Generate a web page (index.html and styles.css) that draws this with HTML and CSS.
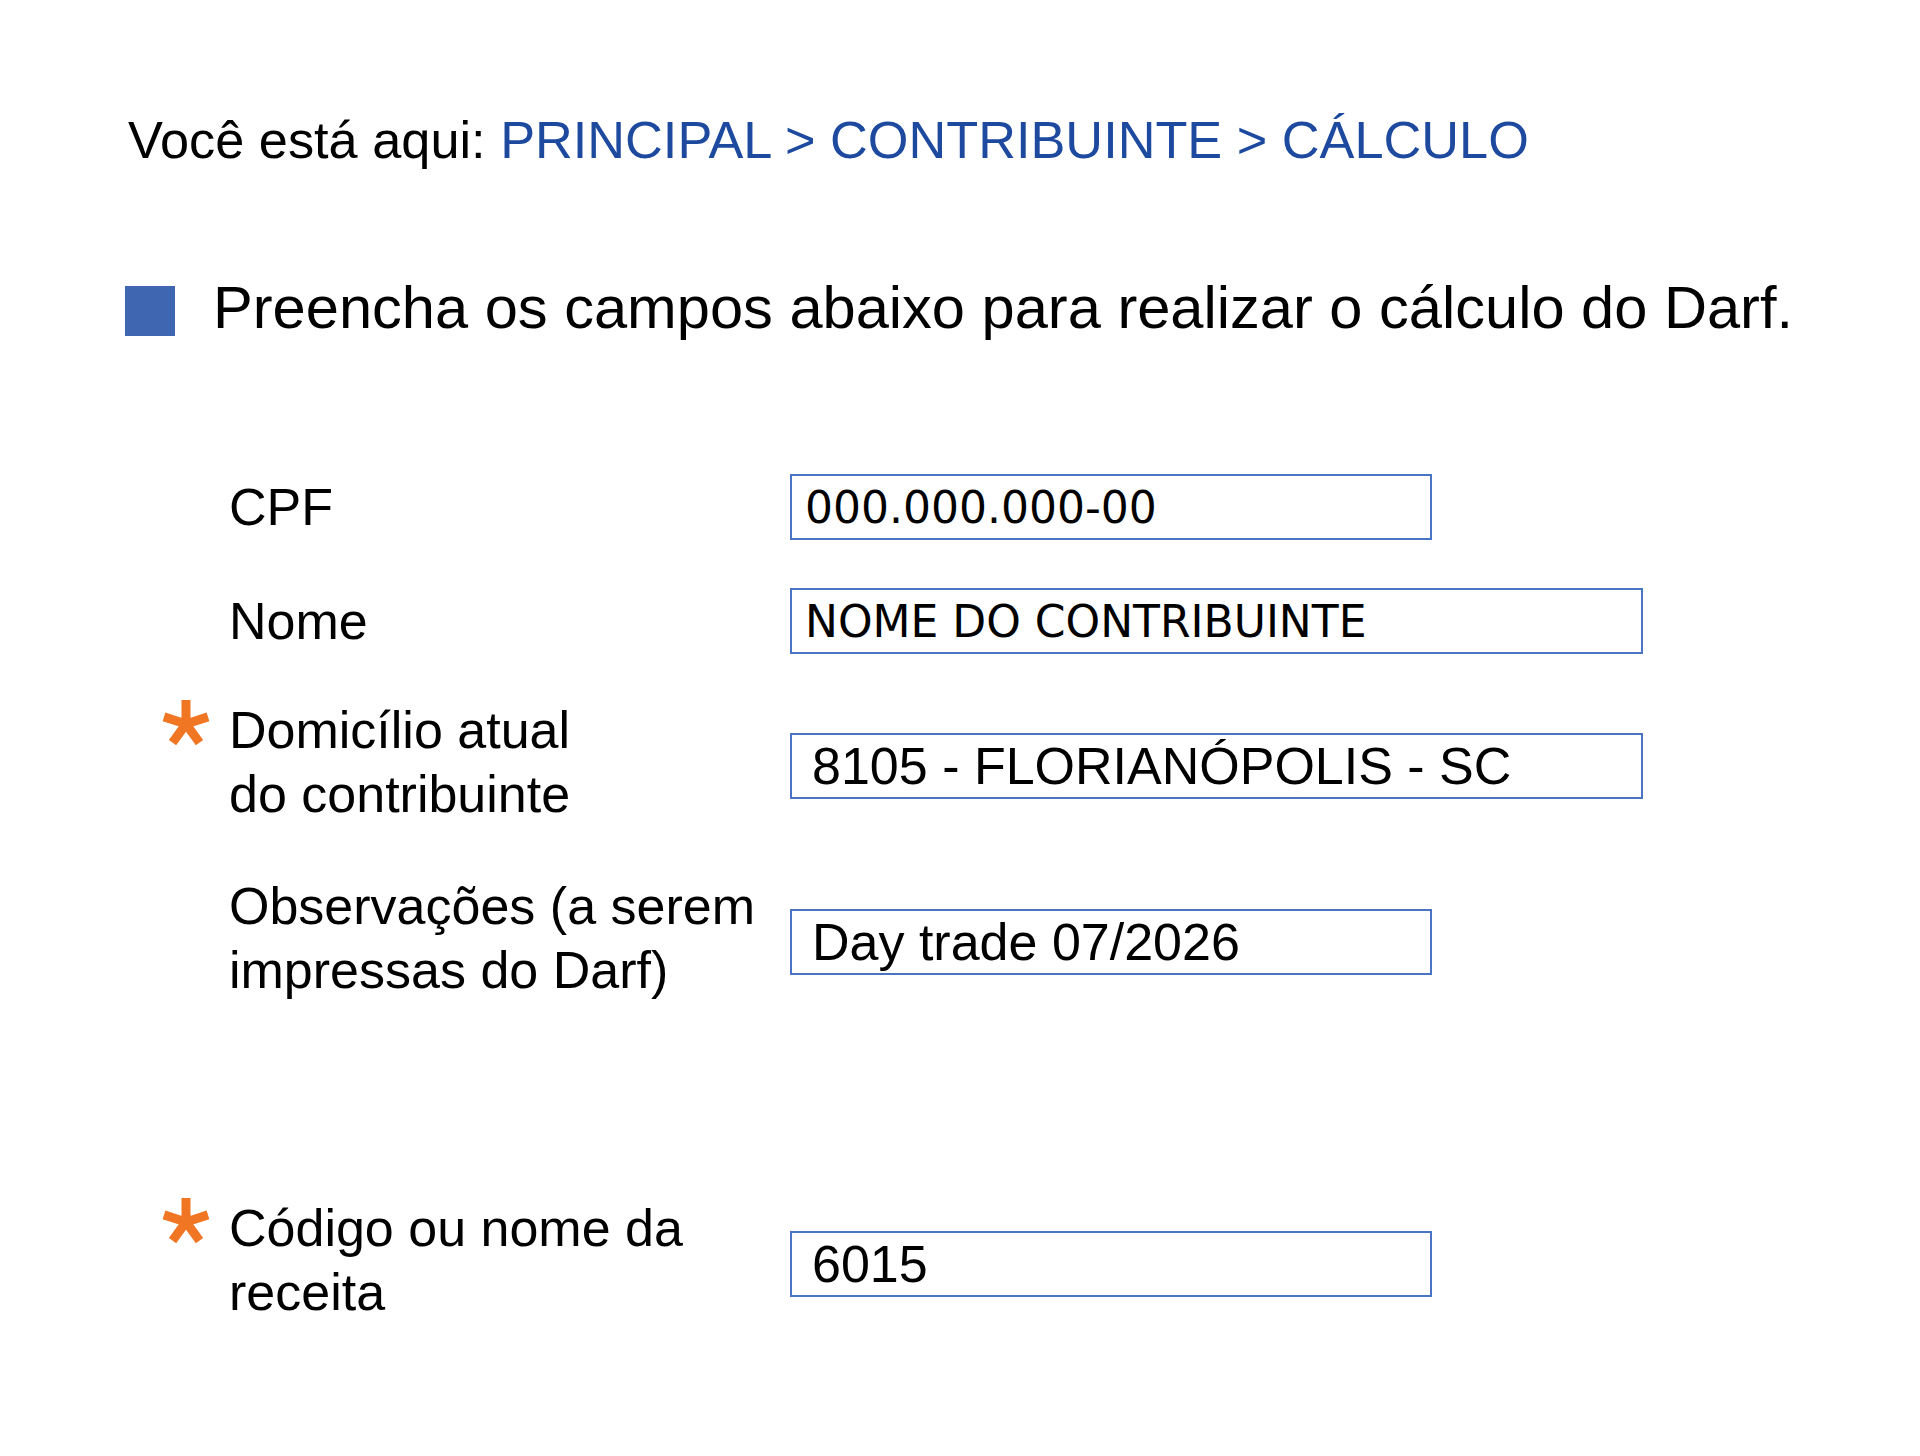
FILE: index.html
```html
<!DOCTYPE html>
<html lang="pt-BR">
    <head>
        <meta charset="UTF-8">
        <meta name="viewport" content="width=device-width, initial-scale=1.0">
        <title>Cálculo do Darf</title>
        <link rel="stylesheet" href="styles.css">
    </head>
    <body>
        <div class="page">
            <p class="breadcrumb">Você está aqui: <span class="trail">PRINCIPAL &gt; CONTRIBUINTE &gt; CÁLCULO</span></p>

            <h1 class="intro">
                <span class="intro-mark"></span>
                Preencha os campos abaixo para realizar o cálculo do Darf.
            </h1>

            <!-- formulário -->
            <form class="darf-form">
                <div class="field">
                    <span class="req"></span>
                    <label class="field-label" for="cpf">CPF</label>
                    <input class="field-input short plain" id="cpf" type="text" value="000.000.000-00">
                </div>

                <div class="field">
                    <span class="req"></span>
                    <label class="field-label" for="nome">Nome</label>
                    <input class="field-input wide plain" id="nome" type="text" value="NOME DO CONTRIBUINTE">
                </div>

                <div class="field">
                    <span class="req">
                        <svg class="star" viewBox="0 0 46 46"><path d="M23 24 L23 0 M23 24 L45 16.9 M23 24 L1 16.9 M23 24 L36.5 42.6 M23 24 L9.5 42.6"/></svg>
                    </span>
                    <label class="field-label two-line" for="domicilio">Domicílio atual<br>do contribuinte</label>
                    <input class="field-input wide" id="domicilio" type="text" value="8105 - FLORIANÓPOLIS - SC">
                </div>

                <div class="field">
                    <span class="req"></span>
                    <label class="field-label two-line" for="obs">Observações (a serem<br>impressas do Darf)</label>
                    <input class="field-input short" id="obs" type="text" value="Day trade 07/2026">
                </div>

                <div class="field later">
                    <span class="req">
                        <svg class="star" viewBox="0 0 46 46"><path d="M23 24 L23 0 M23 24 L45 16.9 M23 24 L1 16.9 M23 24 L36.5 42.6 M23 24 L9.5 42.6"/></svg>
                    </span>
                    <label class="field-label two-line" for="receita">Código ou nome da<br>receita</label>
                    <input class="field-input short" id="receita" type="text" value="6015">
                </div>
            </form>
        </div>
    </body>
</html>
```

FILE: styles.css
```css
* {
    margin: 0;
    padding: 0;
}

body {
    background-color: #fff;
    color: #000;
    font-family: "Liberation Sans", Arial, sans-serif;
}

.page {
    padding: 110px 0 0 125px;
}

/* caminho de navegação */
.breadcrumb {
    margin-left: 3px;
    font-size: 52.3px;
    line-height: 60px;
}

.trail {
    color: #1d4a9f;
}

.intro {
    display: flex;
    align-items: flex-start;
    margin-top: 108px;
    font-size: 59.6px;
    font-weight: normal;
    line-height: 60px;
}

.intro-mark {
    flex-shrink: 0;
    width: 50px;
    height: 50px;
    margin: 8px 38px 0 0;
    background-color: #3f66b0;
}

/* campos */
.darf-form {
    display: flex;
    flex-direction: column;
    gap: 48px;
    margin-top: 136px;
    padding-left: 38px;
}

.field {
    display: flex;
    align-items: center;
}

.field.later {
    margin-top: 146px;
}

.req {
    align-self: flex-start;
    flex-shrink: 0;
    width: 66px;
    margin-top: -2px;
}

.star {
    display: block;
    width: 46px;
    height: 46px;
    overflow: visible;
}

.star path {
    fill: none;
    stroke: #f07623;
    stroke-width: 9;
}

.field-label {
    flex-shrink: 0;
    width: 561px;
    font-size: 52px;
    line-height: 64px;
}

/* rótulos de duas linhas ficam um pouco acima do centro */
.field-label.two-line {
    margin: -4px 0 4px;
}

.field-input {
    box-sizing: border-box;
    height: 66px;
    padding: 0 20px;
    border: 2px solid #4a74c4;
    border-radius: 0;
    background-color: #fff;
    color: #000;
    font: 52px "Liberation Sans", Arial, sans-serif;
    outline: none;
}

.field-input.plain {
    padding: 0 13px;
    font: 44px "DejaVu Sans", sans-serif;
}

.short {
    width: 642px;
}

.wide {
    width: 853px;
}
```
